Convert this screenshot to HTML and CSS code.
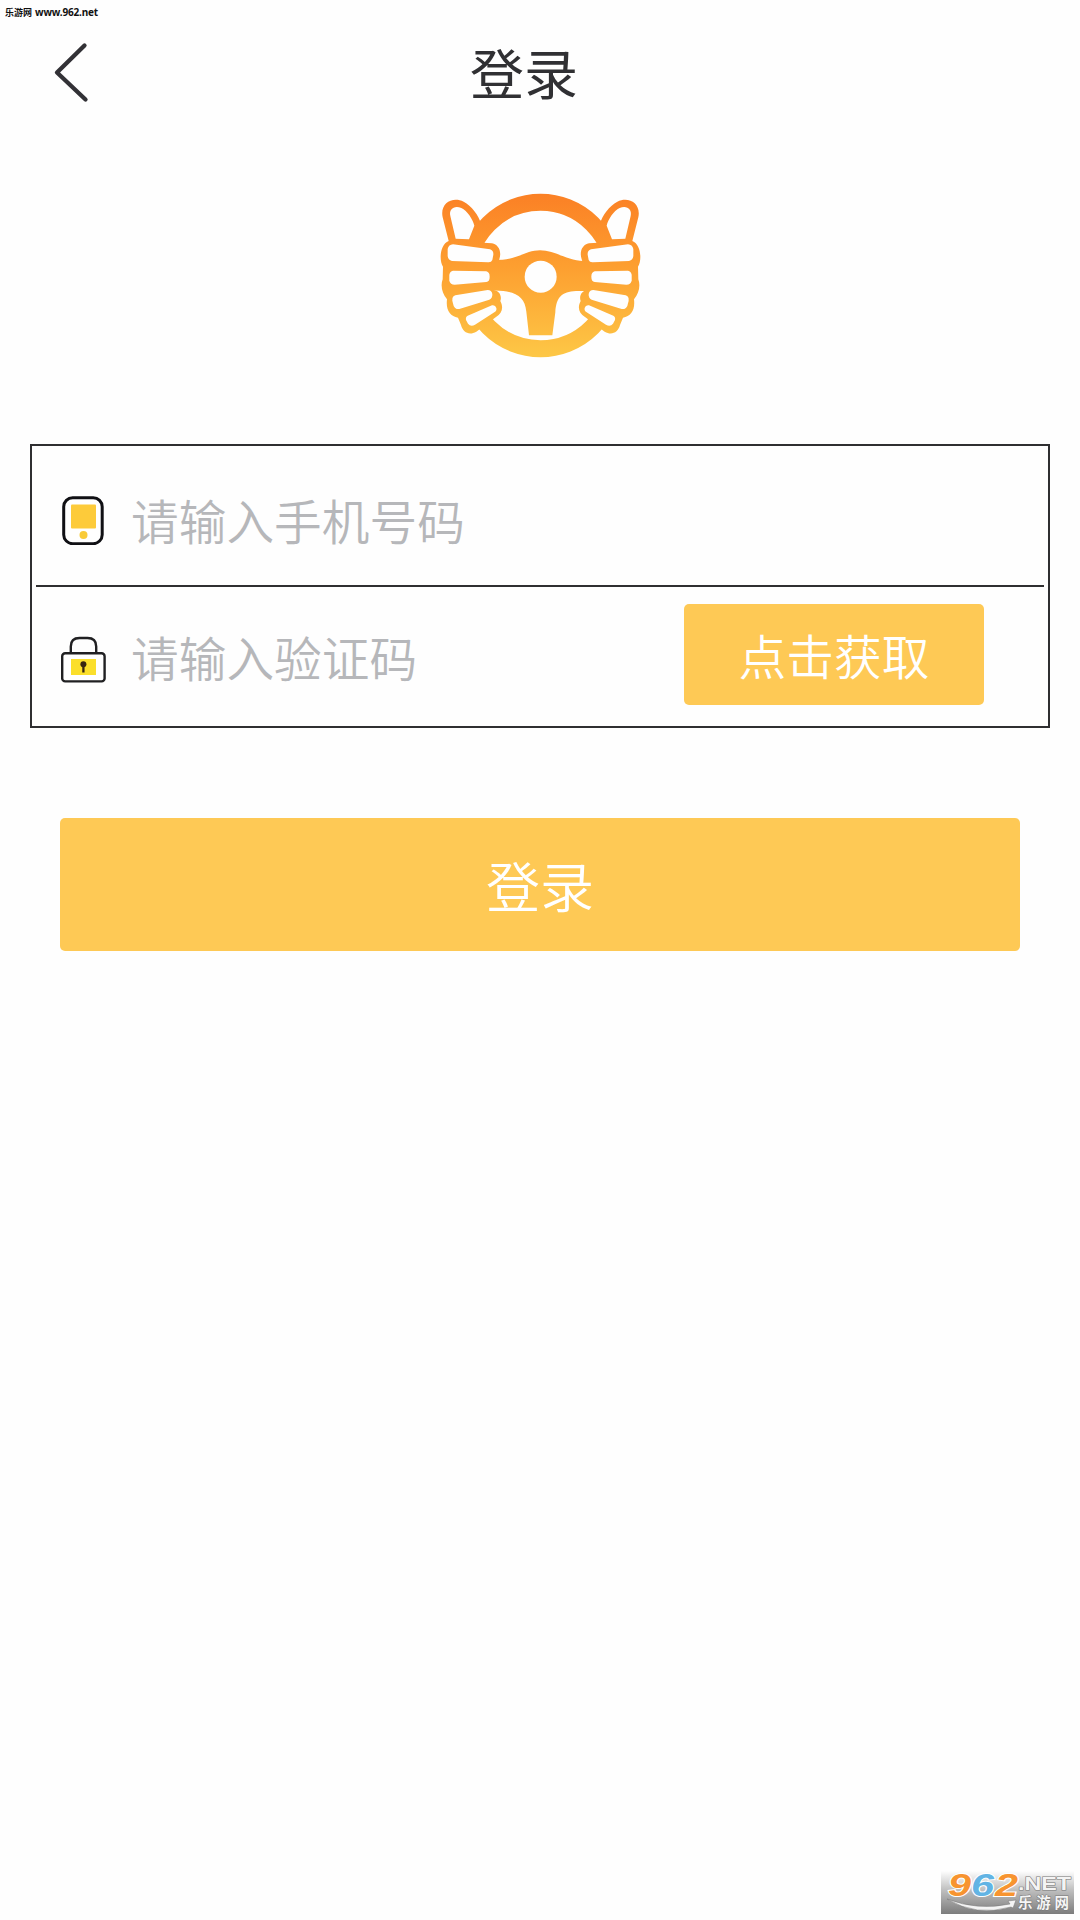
FILE: index.html
```html
<!DOCTYPE html>
<html lang="zh-CN">
<head>
<meta charset="utf-8">
<title>登录</title>
<link rel="stylesheet" href="styles.css">
</head>
<body>
<main class="page">
  <div class="site-mark"><span>乐游网</span><span class="site-url">www.962.net</span></div>
  <header class="header">
    <svg class="back" viewBox="0 0 40 66" width="40" height="66"><path d="M34.5 5.5 7 32.5 35.5 59.5" fill="none" stroke="#323136" stroke-width="4.3" stroke-linecap="round" stroke-linejoin="round"/></svg>
    <h1 class="title">登录</h1>
  </header>
  <svg class="logo" viewBox="0 0 660 570" width="220" height="190">
    <defs>
      <linearGradient id="sun" gradientUnits="userSpaceOnUse" x1="0" y1="40" x2="0" y2="530">
        <stop offset="0" stop-color="#fb8025"/><stop offset=".45" stop-color="#fd9f30"/><stop offset="1" stop-color="#fdc746"/>
      </linearGradient>
      <g id="hand">
        <path fill="url(#sun)" d="M56 183 38 112C29 70 67 48 101 65C124 77 147 106 153 132L133 187 186 190C205 194 216 213 208 238L203 252 190 330C206 330 217 347 211 363C221 382 217 400 198 411L139 455C118 467 99 458 93 435L84 413C60 409 47 390 51 358C36 340 31 317 38 298L39 260C27 244 29 193 56 183Z"/>
        <g fill="#fefefe">
          <path d="M77 176 61 108C56 86 74 75 94 84C112 92 129 119 133 137L117 178Z"/>
          <path d="M69 193 180 208Q191 212 190 224L187 240Q184 248 174 247L66 243Q54 240 53 228V207Q56 194 69 193Z"/>
          <path d="M69 272 169 274Q179 277 179 290 179 304 169 306L74 314Q61 314 58 302V284Q60 273 69 272Z"/>
          <path d="M76 346 173 330Q185 330 187 342 188 354 178 359L88 387Q76 389 71 378L67 362Q66 349 76 346Z"/>
          <path d="M113 407 186 376Q196 374 199 384 201 392 193 397L135 434Q122 441 114 431L108 420Q106 411 113 407Z"/>
        </g>
      </g>
    </defs>
    <circle cx="331.5" cy="286.5" r="219.5" fill="none" stroke="url(#sun)" stroke-width="51"/>
    <path fill="url(#sun)" d="M190 240 218 239C261 236 292 211 330 211C374 211 412 242 461 243L480 275 475 333 438 333C395 335 379 351 376 397L367 466H297L289 395C285 355 264 339 220 333L185 331Z"/>
    <circle cx="332" cy="290" r="48" fill="#fefefe"/>
    <use href="#hand"/>
    <use href="#hand" transform="translate(663 0) scale(-1 1)"/>
  </svg>
  <form class="form">
    <section class="fields">
      <label class="row row-phone">
        <svg class="icon" viewBox="0 0 48 52" width="48" height="52">
          <rect x="5.7" y="4.7" width="38.5" height="46" rx="9" fill="#fff" stroke="#101014" stroke-width="3"/>
          <rect x="13" y="11.5" width="25" height="24" rx="1" fill="#fdcb3a"/><circle cx="25.5" cy="42" r="4" fill="#f9cb38"/>
        </svg>
        <span class="placeholder">请输入手机号码</span>
      </label>
      <label class="row row-code">
        <svg class="icon" viewBox="0 0 48 52" width="48" height="52">
          <path d="M12.8 21V13.5Q12.8 5 21.5 5H29.5Q38.2 5 38.2 13.5V21" fill="none" stroke="#202022" stroke-width="2.4"/>
          <rect x="4.2" y="20.2" width="42.4" height="28.2" rx="3" fill="#fff" stroke="#202022" stroke-width="2.4"/>
          <path d="M13 26H38V42H13Z" fill="#fbdf2b"/><circle cx="25.4" cy="31.2" r="3" fill="#382611"/><path d="M25.4 32V39.5" stroke="#382611" stroke-width="2.3"/>
        </svg>
        <span class="placeholder">请输入验证码</span>
        <button class="code-button" type="button">点击获取</button>
      </label>
    </section>
    <button class="login-button" type="button">登录</button>
  </form>
  <svg class="badge" viewBox="0 0 133 43" width="133" height="43">
    <defs><linearGradient id="shade" x1="0" y1="0" x2="0" y2="1"><stop offset="0" stop-color="#fefefe"/><stop offset=".45" stop-color="#bebebe"/><stop offset="1" stop-color="#7c7c7c"/></linearGradient></defs>
    <path d="M0 0H133V43H0Z" fill="url(#shade)"/>
    <path d="M6 28Q37 40 69 33L67 30 75 29 72 37 70 36Q35 46 6 28Z" fill="#f4f4f4" stroke="#777" stroke-width=".5"/>
    <g class="badge-number"><text x="7" y="25" textLength="23" lengthAdjust="spacingAndGlyphs" fill="#f79430">9</text><text x="30" y="25" textLength="23" lengthAdjust="spacingAndGlyphs" fill="#62b4e4">6</text><text x="54" y="25" textLength="23" lengthAdjust="spacingAndGlyphs" fill="#f79430">2</text></g>
    <text class="badge-net" x="77" y="19" textLength="53" lengthAdjust="spacingAndGlyphs">.NET</text>
    <text class="badge-name" x="77" y="36.5" textLength="51">乐游网</text>
  </svg>
</main>
</body>
</html>
```

FILE: styles.css
```css
* { box-sizing: border-box; }
body { margin: 0; background: #fefefe; font-family: "Noto Sans CJK SC", sans-serif; }
.page { width: 1080px; height: 1920px; display: flex; flex-direction: column; overflow: hidden; }
.site-mark { height: 26px; padding-left: 5px; display: flex; gap: 3px; font-size: 9px; line-height: 26px; font-weight: 700; color: #111; }
.site-url { font-family: "Noto Sans", sans-serif; font-size: 10px; line-height: 25px; letter-spacing: -.17px; }
.header { height: 154px; display: flex; align-items: flex-start; }
.back { flex: none; margin: 14px 0 0 50px; }
.title { margin: 9px 0 0 380px; font-size: 54px; line-height: 74px; font-weight: 400; color: #303033; }
.logo { flex: none; margin-left: 430px; }
.form { margin: 74px 30px 0; }
.fields { height: 284px; border: 2px solid #2f2f31; }
.row { display: flex; padding: 0 26px; }
.row-phone { height: 141px; margin: 0 4px; padding: 0 22px; border-bottom: 2px solid #2f2f31; }
.icon { flex: none; margin-top: 47px; }
.row-code .icon { margin-top: 46px; }
.placeholder { margin: 39px 0 0 25px; font-size: 47.7px; line-height: 70px; font-weight: 350; color: #b6b7ba; white-space: nowrap; }
.row-code .placeholder { margin-top: 35px; }
button { border: 0; padding: 0; color: #fff; background: #fec955; font-family: inherit; font-weight: 350; border-radius: 5px; }
.code-button { width: 300px; height: 101px; margin: 17px 38px 0 auto; font-size: 47.7px; }
.login-button { display: block; width: 960px; height: 133px; margin: 90px 0 0 30px; font-size: 54px; }
.badge { flex: none; margin: auto 6px 6px auto; overflow: visible; }
.badge-number { font: italic 700 32px "Liberation Sans", sans-serif; stroke: #fff; stroke-width: 2px; paint-order: stroke; }
.badge-net { font: 700 18.5px "Liberation Sans", sans-serif; fill: #f4f4f4; stroke: #777; stroke-width: 1px; paint-order: stroke; }
.badge-name { font: 700 14.5px "Noto Sans CJK SC", sans-serif; fill: #f5f5f5; stroke: #777; stroke-width: 1px; paint-order: stroke; }
```
